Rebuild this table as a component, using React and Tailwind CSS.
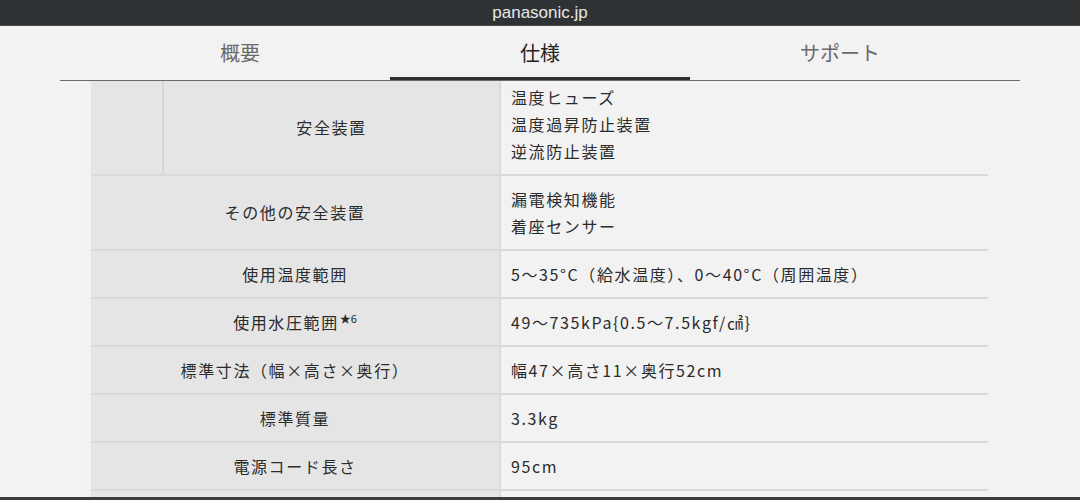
const font = "font-['Noto_Sans_CJK_JP','Noto_Sans',sans-serif]";

const tabs = [
  { label: "概要", active: false },
  { label: "仕様", active: true },
  { label: "サポート", active: false },
];

const rows = [
  { label: "その他の安全装置", values: ["漏電検知機能", "着座センサー"] },
  { label: "使用温度範囲", values: ["5～35°C（給水温度）、0～40°C（周囲温度）"] },
  { label: "使用水圧範囲", star: "6", values: ["49～735kPa{0.5～7.5kgf/㎠}"] },
  { label: "標準寸法（幅×高さ×奥行）", values: ["幅47×高さ11×奥行52cm"] },
  { label: "標準質量", values: ["3.3kg"] },
  { label: "電源コード長さ", values: ["95cm"] },
  { label: "", values: [""] },
];

function Row({ label, star, values }) {
  return (
    <div className="grid grid-cols-[410px_1fr] border-b-2 border-[#d9d9d9]">
      <div className="flex items-center justify-center bg-[#e5e5e5] border-r-2 border-[#dadada] py-[9.5px]">
        <span>
          {label}
          {star && (
            <sup className="text-[11px] tracking-normal ml-[1px]">★{star}</sup>
          )}
        </span>
      </div>
      <div className="flex flex-col justify-center pl-[10px] py-[9.5px]">
        {values.map((v, i) => (
          <div key={i} className="min-h-[27px]">{v}</div>
        ))}
      </div>
    </div>
  );
}

export default function App() {
  return (
    <div className={`w-[1080px] h-[500px] overflow-hidden flex flex-col bg-[#f2f2f2] ${font}`}>
      {/* browser address bar */}
      <div className="h-[26px] shrink-0 bg-[#2f3234] flex items-center justify-center border-b border-[#4a4d50]">
        <span className="text-[17px] text-[#e8e8e8] font-['Liberation_Sans',sans-serif] leading-none">
          panasonic.jp
        </span>
      </div>

      {/* tabs */}
      <div className="mx-[60px] border-b border-[#6b6b6b] shrink-0">
        <div className="flex px-[30px]">
          {tabs.map((t) => (
            <div
              key={t.label}
              className={`w-[300px] h-[54px] flex items-center justify-center text-[20px] ${
                t.active
                  ? "text-[#222] border-b-[3px] border-[#2e2e2e] -mb-[1px] pt-[3px]"
                  : "text-[#6a6a6a]"
              }`}
            >
              {t.label}
            </div>
          ))}
        </div>
      </div>

      {/* spec table */}
      <div className="flex-1 overflow-hidden">
        <div className="ml-[91px] w-[897px] text-[16px] leading-[27px] tracking-[1.6px] text-[#2b2b2b]">
          <div className="grid grid-cols-[410px_1fr] border-b-2 border-[#d9d9d9]">
            <div className="flex bg-[#e5e5e5] border-r-2 border-[#dadada]">
              <div className="w-[73px] border-r-2 border-[#d6d6d6]" />
              <div className="flex-1 flex items-center justify-center">安全装置</div>
            </div>
            <div className="flex flex-col pl-[10px] pt-[2.5px] pb-[9.5px]">
              <div>温度ヒューズ</div>
              <div>温度過昇防止装置</div>
              <div>逆流防止装置</div>
            </div>
          </div>
          {rows.map((r, i) => (
            <Row key={i} {...r} />
          ))}
        </div>
      </div>

      <div className="h-[3px] shrink-0 bg-[#3a3d40]" />
    </div>
  );
}
